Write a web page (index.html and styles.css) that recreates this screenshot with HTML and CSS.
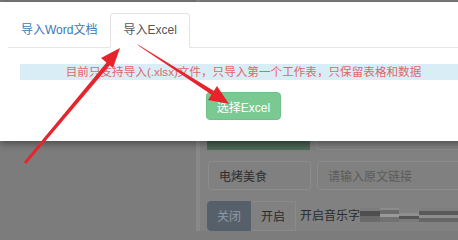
FILE: index.html
```html
<!DOCTYPE html>
<html>
<head>
<meta charset="utf-8">
<link rel="stylesheet" href="styles.css">
</head>
<body>
<div class="page">
  <div class="app">
    <div class="side"></div>
    <div class="panel">
      <div class="row row-top">
        <div class="cover"></div>
        <div class="box"></div>
      </div>
      <div class="row row-inputs">
        <div class="input input-name">电烤美食</div>
        <div class="input input-link">请输入原文链接</div>
      </div>
      <div class="row row-switch">
        <div class="btn-group">
          <span class="seg seg-on">关闭</span>
          <span class="seg">开启</span>
        </div>
        <span class="label">开启音乐字</span>
        <div class="glitch">
          <span class="g g1"></span><span class="g g2"></span><span class="g g3"></span><span class="g g4"></span>
        </div>
      </div>
    </div>
  </div>

  <div class="modal">
    <ul class="tabs">
      <li class="tab">导入Word文档</li>
      <li class="tab active">导入Excel</li>
    </ul>
    <div class="tab-body">
      <div class="alert">目前只支持导入(.xlsx)文件，只导入第一个工作表，只保留表格和数据</div>
      <div class="actions">
        <button class="btn-green">选择Excel</button>
      </div>
    </div>
  </div>

  <svg class="arrows" width="458" height="231" viewBox="0 0 458 231">
    <polygon fill="#e5242b" points="24,162 26,164 110,65 107,62"/>
    <polygon fill="#e5242b" points="120,48 113,68 101,58"/>
    <polygon fill="#e5242b" points="137,44 139,46 212,95 214,91"/>
    <polygon fill="#e5242b" points="229,104 208,100 217,86"/>
  </svg>
</div>
</body>
</html>
```
FILE: styles.css
```css
* { box-sizing: border-box; }
html, body { margin: 0; padding: 0; }
body {
  font-family: "Liberation Sans", "Noto Sans CJK SC", sans-serif;
  font-size: 12px;
  background: #7c7c7c;
}
.page {
  position: relative;
  width: 458px;
  height: 231px;
  overflow: hidden;
  background: #7c7c7c;
}
.app {
  display: flex;
  height: 231px;
}
.side {
  width: 196px;
  flex: none;
}
.panel {
  flex: 1;
  background: #818181;
  border-left: 4px solid #898989;
  padding-left: 7px;
  display: flex;
  flex-direction: column;
}
.row {
  display: flex;
  gap: 6px;
}
.row-top {
  margin-top: 115px;
  height: 40px;
}
.cover {
  width: 103px;
  background: linear-gradient(180deg, #5a7a68 0%, #3e5a4b 70%, #4f6a5b 100%);
}
.box {
  flex: 1;
  border: 1px solid #8b8b8b;
  border-radius: 4px;
  margin-right: -10px;
}
.row-inputs {
  margin-top: 11px;
  height: 29px;
}
.input {
  border: 1px solid #8c8c8c;
  border-radius: 4px;
  background: #808080;
  padding: 0 10px;
  line-height: 27px;
  font-size: 12px;
  font-family: "Noto Sans CJK SC", sans-serif;
}
.input-name {
  width: 103px;
  margin-left: 1px;
  color: #2e2e2e;
}
.input-link {
  flex: 1;
  margin-right: -10px;
  color: #5b5b5b;
}
.row-switch {
  margin-top: 11px;
  height: 30px;
  gap: 0;
  align-items: flex-start;
}
.btn-group {
  display: flex;
  height: 30px;
}
.seg {
  display: block;
  width: 44px;
  height: 30px;
  line-height: 28px;
  text-align: center;
  font-size: 12px;
  border: 1px solid #8a8a8a;
  color: #2b2b2b;
  font-family: "Noto Sans CJK SC", sans-serif;
}
.seg-on {
  background: #56606b;
  border-color: #56606b;
  color: #8d99a6;
  border-radius: 4px 0 0 4px;
}
.seg + .seg {
  width: 45px;
  border-left: none;
}
.label {
  margin-left: 4px;
  line-height: 28px;
  color: #2b2b2b;
  font-size: 12px;
  font-family: "Noto Sans CJK SC", sans-serif;
}
.glitch {
  display: flex;
  margin-top: 7px;
  height: 14px;
  flex: 1;
  margin-right: -10px;
}
.g { display: block; height: 14px; }
.g1 { width: 20px; background: linear-gradient(180deg, #7c7c7c 0 20%, #4e4e4e 20% 60%, #6a6a6a 60% 100%); }
.g2 { width: 19px; background: linear-gradient(180deg, #8c8c8c 0 15%, #6b6b6b 15% 40%, #999 40% 65%, #727272 65% 100%); }
.g3 { width: 20px; background: linear-gradient(180deg, #828282 0 35%, #8f8f8f 35% 55%, #565656 55% 80%, #7a7a7a 80% 100%); }
.g4 { width: 40px; background: linear-gradient(180deg, #7e7e7e 0 25%, #5a5a5a 25% 50%, #8d8d8d 50% 70%, #666 70% 100%); }

.modal {
  position: absolute;
  left: 0;
  top: 2px;
  width: 475px;
  height: 139px;
  background: #fff;
  box-shadow: 0 2px 8px rgba(0, 0, 0, 0.45);
  padding: 11px 0 0 8px;
}
.tabs {
  list-style: none;
  margin: 0;
  padding: 0;
  display: flex;
  border-bottom: 1px solid #e6e6e6;
  height: 35px;
}
.tab {
  padding: 0 12px;
  margin-right: 0;
  height: 35px;
  line-height: 33px;
  border: 1px solid transparent;
  border-radius: 4px 4px 0 0;
  color: #3d78b3;
  font-size: 12px;
}
.tab.active {
  color: #555;
  border-color: #e3e3e3;
  border-bottom-color: #fff;
  background: #fff;
}
.tab-body {
  padding: 16px 8px 0 12px;
}
.alert {
  height: 16px;
  line-height: 16px;
  background: #d9edf7;
  color: #e36667;
  text-align: center;
  font-size: 11.6px;
  white-space: nowrap;
}
.actions {
  display: flex;
  justify-content: center;
  margin-top: 12px;
}
.btn-green {
  height: 28px;
  padding: 0 10px;
  border: 1px solid #6fc089;
  border-radius: 4px;
  background: #7ac892;
  color: #fff;
  font-family: "Liberation Sans", "Noto Sans CJK SC", sans-serif;
  font-size: 12px;
}
.arrows {
  position: absolute;
  left: 0;
  top: 0;
}
```
